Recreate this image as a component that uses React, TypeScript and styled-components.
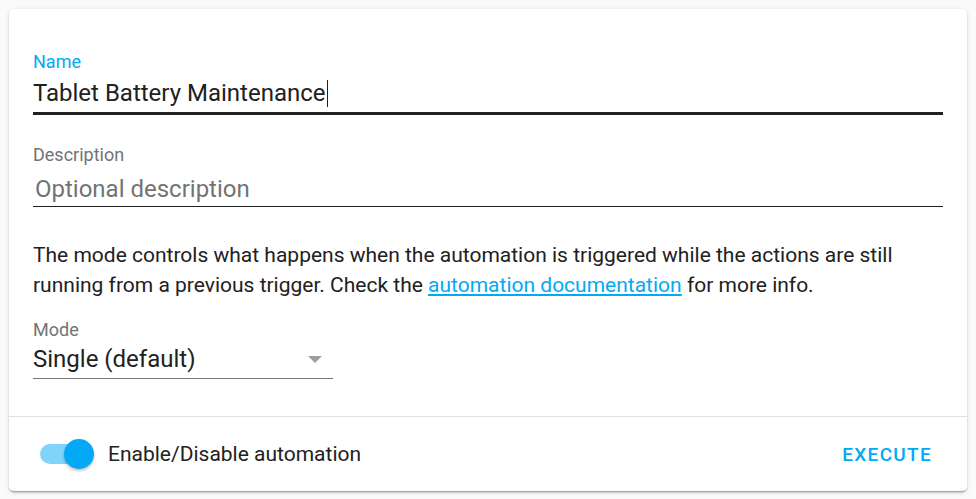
import styled, { createGlobalStyle } from "styled-components";

const GlobalStyle = createGlobalStyle`
    html, body {
        margin: 0;
        padding: 0;
        background: #fafafa;
        font-family: Roboto, "Liberation Sans", sans-serif;
        color: #212121;
    }
`;

const colors = {
    primary: "#03a9f4",
    primaryLight: "#80d4f9",
    text: "#212121",
    secondary: "#737373",
    divider: "#e0e0e0",
};

const Page = styled.div`
    padding: 9px;
`;

const Card = styled.div`
    background: #fff;
    border-radius: 5px;
    box-shadow: 0 2px 2px 0 rgba(0, 0, 0, 0.14), 0 1px 5px 0 rgba(0, 0, 0, 0.12), 0 3px 1px -2px rgba(0, 0, 0, 0.2);
`;

const CardContent = styled.div`
    padding: 43px 24px 37px 24px;
    display: flex;
    flex-direction: column;
`;

const Field = styled.div<{ $width?: string; $gap?: number; $mt?: number }>`
    width: ${(p) => p.$width || "100%"};
    margin-top: ${(p) => p.$mt || 0}px;
    display: flex;
    flex-direction: column;
    gap: ${(p) => p.$gap ?? 5}px;
`;

const Label = styled.label<{ $focused?: boolean }>`
    font-size: 18px;
    line-height: 20px;
    color: ${(p) => (p.$focused ? colors.primary : colors.secondary)};
`;

const InputRow = styled.div<{ $line: number; $lineColor: string; $pb?: number }>`
    display: flex;
    align-items: center;
    font-size: 24px;
    line-height: 28px;
    padding-bottom: ${(p) => p.$pb ?? 5}px;
    border-bottom: ${(p) => p.$line}px solid ${(p) => p.$lineColor};
`;

const Value = styled.span`
    color: ${colors.text};
`;

const Caret = styled.span`
    display: inline-block;
    width: 1px;
    height: 27px;
    background: ${colors.text};
    margin-left: 1px;
`;

const Placeholder = styled.span`
    color: ${colors.secondary};
    padding-left: 2px;
`;

const Help = styled.p`
    margin: 33px 0 0 0;
    font-size: 21px;
    line-height: 30px;
    color: ${colors.text};
`;

const Link = styled.a`
    color: ${colors.primary};
    text-decoration: underline;
`;

const Arrow = styled.span`
    margin-left: auto;
    margin-right: 11px;
    width: 0;
    height: 0;
    border-left: 7px solid transparent;
    border-right: 7px solid transparent;
    border-top: 7px solid #9e9e9e;
`;

const Footer = styled.div`
    border-top: 1px solid ${colors.divider};
    height: 74px;
    padding: 0 24px 0 31px;
    display: flex;
    align-items: center;
    justify-content: space-between;
`;

const ToggleWrap = styled.div`
    display: flex;
    align-items: center;
    gap: 20px;
    font-size: 21px;
`;

const Track = styled.div<{ $on: boolean }>`
    position: relative;
    width: 48px;
    height: 20px;
    border-radius: 10px;
    background: ${(p) => (p.$on ? colors.primaryLight : "#bdbdbd")};
`;

const Thumb = styled.div<{ $on: boolean }>`
    position: absolute;
    top: -5px;
    left: ${(p) => (p.$on ? 24 : -6)}px;
    width: 30px;
    height: 30px;
    border-radius: 50%;
    background: ${(p) => (p.$on ? colors.primary : "#fafafa")};
    box-shadow: 0 2px 3px rgba(0, 0, 0, 0.25);
`;

const Button = styled.button`
    border: none;
    background: none;
    font-family: inherit;
    font-size: 19px;
    font-weight: 500;
    letter-spacing: 1.3px;
    color: ${colors.primary};
    padding: 8px 11px;
    cursor: pointer;
`;

export default function App() {
    return (
        <>
            <GlobalStyle />
            <Page>
                <Card>
                    <CardContent>
                        <Field $gap={7}>
                            <Label $focused>Name</Label>
                            <InputRow $line={3} $lineColor={colors.text} $pb={5}>
                                <Value>Tablet Battery Maintenance</Value>
                                <Caret />
                            </InputRow>
                        </Field>
                        <Field $gap={10} $mt={30}>
                            <Label>Description</Label>
                            <InputRow $line={1} $lineColor={colors.text} $pb={3}>
                                <Placeholder>Optional description</Placeholder>
                            </InputRow>
                        </Field>
                        <Help>
                            The mode controls what happens when the automation is triggered while the actions are still
                            running from a previous trigger. Check the <Link href="#">automation documentation</Link> for more info.
                        </Help>
                        <Field $width="300px" $gap={5} $mt={20}>
                            <Label>Mode</Label>
                            <InputRow $line={1} $lineColor="#757575" $pb={5}>
                                <Value>Single (default)</Value>
                                <Arrow />
                            </InputRow>
                        </Field>
                    </CardContent>
                    <Footer>
                        <ToggleWrap>
                            <Track $on>
                                <Thumb $on />
                            </Track>
                            <span>Enable/Disable automation</span>
                        </ToggleWrap>
                        <Button>EXECUTE</Button>
                    </Footer>
                </Card>
            </Page>
        </>
    );
}
